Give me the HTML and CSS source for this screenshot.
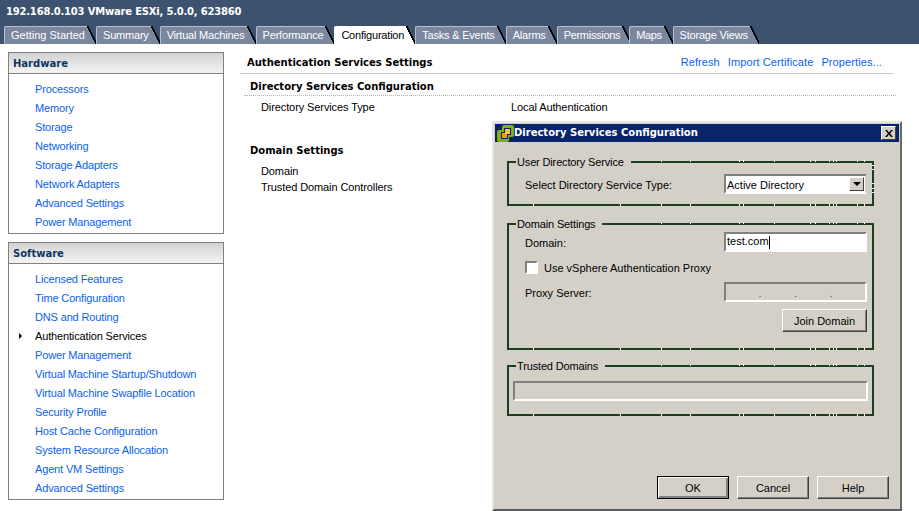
FILE: index.html
```html
<!DOCTYPE html>
<html lang="en">
<head>
<meta charset="utf-8">
<title>Directory Services Configuration</title>
<link rel="stylesheet" href="styles.css">
</head>
<body>
<header class="top">
  <div class="host">192.168.0.103 VMware ESXi, 5.0.0, 623860</div>
  <nav class="tabs">
    <a class="tab">Getting Started</a>
    <a class="tab">Summary</a>
    <a class="tab">Virtual Machines</a>
    <a class="tab">Performance</a>
    <a class="tab active">Configuration</a>
    <a class="tab">Tasks &amp; Events</a>
    <a class="tab">Alarms</a>
    <a class="tab">Permissions</a>
    <a class="tab">Maps</a>
    <a class="tab">Storage Views</a>
  </nav>
</header>
<div class="body">
  <aside class="side">
    <section class="panel">
      <h2 class="panel-head">Hardware</h2>
      <ul class="menu">
        <li>Processors</li><li>Memory</li><li>Storage</li><li>Networking</li>
        <li>Storage Adapters</li><li>Network Adapters</li><li>Advanced Settings</li><li>Power Management</li>
      </ul>
    </section>
    <section class="panel">
      <h2 class="panel-head">Software</h2>
      <ul class="menu">
        <li>Licensed Features</li><li>Time Configuration</li><li>DNS and Routing</li>
        <li class="current">Authentication Services</li>
        <li>Power Management</li><li>Virtual Machine Startup/Shutdown</li><li>Virtual Machine Swapfile Location</li>
        <li>Security Profile</li><li>Host Cache Configuration</li><li>System Resource Allocation</li>
        <li>Agent VM Settings</li><li>Advanced Settings</li>
      </ul>
    </section>
  </aside>
  <main class="content">
    <div class="content-head">
      <h1 class="title">Authentication Services Settings</h1>
      <div class="links"><a>Refresh</a><a>Import Certificate</a><a>Properties...</a></div>
    </div>
    <h3 class="sub first">Directory Services Configuration</h3>
    <div class="row"><span class="key">Directory Services Type</span><span>Local Authentication</span></div>
    <h3 class="sub second">Domain Settings</h3>
    <div class="row tight">Domain</div>
    <div class="row tight">Trusted Domain Controllers</div>
  </main>
</div>
<div class="dialog">
  <div class="titlebar">
    <svg class="logo" width="17" height="17" viewBox="0 0 17 17">
      <path d="M6 0h9a2 2 0 0 1 2 2v8a2 2 0 0 1-2 2h-3v3a2 2 0 0 1-2 2H2a2 2 0 0 1-2-2V7a2 2 0 0 1 2-2h3V2a1 1 0 0 1 1-1z" fill="#7fae1e"/>
      <path d="M7 3h7v7h-3v4H4V7h3z" fill="#0a246a"/>
      <rect x="5" y="8" width="5" height="5" fill="#ee9a18"/>
      <rect x="8" y="4" width="5" height="5" fill="#f6c440"/>
    </svg>
    <span class="dialog-title">Directory Services Configuration</span>
    <button class="close" aria-label="Close"><svg width="8" height="7" viewBox="0 0 8 7"><path d="M0 0l2 0 2 2.4L6 0l2 0-3 3.5L8 7 6 7 4 4.6 2 7 0 7l3-3.5z" fill="#000"/></svg></button>
  </div>
  <div class="dialog-body">
    <fieldset class="group g1">
      <legend>User Directory Service</legend>
      <div class="ticks"></div>
      <div class="field">
        <span>Select Directory Service Type:</span>
        <div class="select"><span>Active Directory</span><i class="arrow"></i></div>
      </div>
    </fieldset>
    <fieldset class="group g2">
      <legend>Domain Settings</legend>
      <div class="ticks"></div>
      <div class="field">
        <span>Domain:</span>
        <div class="input"><span>test.com</span><i class="caret"></i></div>
      </div>
      <label class="check"><i class="box"></i><span>Use vSphere Authentication Proxy</span></label>
      <div class="field f-proxy">
        <span>Proxy Server:</span>
        <div class="input off"><b>.</b><b>.</b><b>.</b></div>
      </div>
      <div class="join"><button class="btn wide">Join Domain</button></div>
    </fieldset>
    <fieldset class="group g3">
      <legend>Trusted Domains</legend>
      <div class="ticks"></div>
      <div class="listbox"></div>
    </fieldset>
    <div class="actions">
      <button class="btn default">OK</button>
      <button class="btn">Cancel</button>
      <button class="btn">Help</button>
    </div>
  </div>
</div>
</body>
</html>
```
FILE: styles.css
```css
* { box-sizing: border-box; }
html, body { margin: 0; padding: 0; }
body {
  width: 919px; height: 511px; overflow: hidden; position: relative;
  background: #fff; color: #000;
  font: 11px/13px "Liberation Sans", Tahoma, sans-serif;
}
ul { list-style: none; margin: 0; padding: 0; }
h1, h2, h3 { margin: 0; }

.top { height: 44px; background: #3d526e; }
.host { height: 26px; padding: 5px 0 0 6px; color: #fff; font: bold 10px/14px "DejaVu Sans", sans-serif; letter-spacing: -0.2px; }
.tabs { display: flex; height: 18px; padding-left: 4px; letter-spacing: -0.2px; }
.tab {
  position: relative; height: 18px; padding: 2px 2px 0 6px; margin-right: 9px;
  background: #7b879f; color: #fff; border-top: 1px solid #b7bfcd; border-left: 1px solid #b7bfcd;
  border-radius: 2px 0 0 0; white-space: nowrap; z-index: 1;
}
.tab:first-child { letter-spacing: 0; }
.tab:nth-child(8) { letter-spacing: -0.3px; margin-right: 7px; }
.tab:nth-child(9) { letter-spacing: -0.4px; }
.tab::after {
  content: ""; position: absolute; top: -1px; right: -9px; width: 9px; height: 18px;
  background: linear-gradient(to top right, #7b879f 0 48%, #000 48% 58%, transparent 58%);
}
.tab.active { background: #fff; color: #000; border-color: #fff; }
.tab.active::after { background: linear-gradient(to top right, #fff 0 48%, #000 48% 58%, transparent 58%); }

.body { display: flex; align-items: flex-start; height: 467px; padding: 8px 0 0 8px; }
.side { width: 216px; display: flex; flex-direction: column; gap: 8px; flex: none; }
.panel { border: 1px solid #808080; }
.panel-head {
  height: 21px; padding: 4px 0 0 4px; border-bottom: 1px solid #808080;
  color: #0f3560; font: bold 10px/14px "DejaVu Sans", sans-serif;
  background: linear-gradient(#d2d2d2, #f4f4f4);
}
.menu { padding: 6px 0 1px 26px; letter-spacing: -0.15px; }
.menu li { height: 19px; line-height: 19px; color: #0a5ff0; white-space: nowrap; position: relative; }
.menu li.current { color: #000; }
.menu li.current::before {
  content: ""; position: absolute; left: -16px; top: 6px;
  border-left: 3px solid #000; border-top: 3px solid transparent; border-bottom: 3px solid transparent;
}

.content { flex: 1; padding-left: 16px; position: relative; }
.content-head { display: flex; justify-content: space-between; width: 653px; height: 22px; border-bottom: 1px solid #c4c4c4; padding: 4px 11px 0 7px; }
.title { font: bold 10px/14px "DejaVu Sans", sans-serif; }
.links { display: flex; gap: 8px; color: #0a5ff0; letter-spacing: 0.1px; }
.sub { font: bold 10px/14px "DejaVu Sans", sans-serif; margin-left: 10px; }
.sub.first { margin-left: 4px; width: 652px; padding: 6px 0 1px 6px; border-bottom: 1px dotted #b0b0b0; height: 22px; }
.sub.second { margin-top: 30px; }
.row { display: flex; padding-left: 21px; margin-top: 5px; line-height: 13px; letter-spacing: -0.1px; }
.key { width: 250px; }
.row.tight { margin-top: 3px; height: 13px; }
.sub.second + .row { margin-top: 7px; }

.dialog {
  position: absolute; left: 492px; top: 121px; width: 410px; height: 390px;
  background: #d4d0c8; border: 2px solid; border-color: #e8e6e0 #6a6a6a #5a5a5a #e8e6e0; padding: 1px;
  display: flex; flex-direction: column; z-index: 5;
}
.titlebar { height: 18px; background: #0a246a; display: flex; align-items: center; padding: 0 3px 0 2px; flex: none; }
.logo { flex: none; }
.dialog-title { color: #fff; font: bold 10px/14px "DejaVu Sans", sans-serif; flex: 1; }
.close { width: 15px; height: 14px; padding: 0; background: #d4d0c8; border: 1px solid; border-color: #fff #404040 #404040 #fff; display: flex; align-items: center; justify-content: center; }
.dialog-body { flex: 1; padding: 13px 0 0 12px; position: relative; }
.group {
  position: relative; width: 367px; margin: 0; padding: 0 5px 0 16px; min-width: 0;
  border: 2px solid #1d3d20;
}
.group legend { padding: 0 7px 0 1px; margin-left: -9px; line-height: 15px; height: 13px; letter-spacing: -0.15px; }
.ticks { position: absolute; inset: -8px -2px -2px -2px; pointer-events: none;
  --marks: linear-gradient(90deg, transparent 26px, #fff 26px 27px, transparent 27px 113px, #fff 113px 114px, transparent 114px 154px, #fff 154px 155px, transparent 155px 183px, #fff 183px 184px, transparent 184px 232px, #fff 232px 233px, transparent 233px 236px, #fff 236px 237px, transparent 237px 267px, #fff 267px 268px, transparent 268px 303px, #fff 303px 304px, transparent 304px 308px, #fff 308px 309px, transparent 309px 322px, #fff 322px 323px, transparent 323px 326px, #fff 326px 327px, transparent 327px 329px, #fff 329px 330px, transparent 330px 350px, #fff 350px 351px, transparent 351px 357px, #fff 357px 358px, transparent 358px);
  --marks-top: linear-gradient(90deg, transparent 154px, #fff 154px 155px, transparent 155px 183px, #fff 183px 184px, transparent 184px 232px, #fff 232px 233px, transparent 233px 236px, #fff 236px 237px, transparent 237px 267px, #fff 267px 268px, transparent 268px 303px, #fff 303px 304px, transparent 304px 308px, #fff 308px 309px, transparent 309px 322px, #fff 322px 323px, transparent 323px 326px, #fff 326px 327px, transparent 327px 329px, #fff 329px 330px, transparent 330px 350px, #fff 350px 351px, transparent 351px 357px, #fff 357px 358px, transparent 358px);
  background: var(--marks) 0 100% / 100% 2px no-repeat, var(--marks-top) 0 0 / 100% 2px no-repeat;
}
.g1 .ticks {
  background:
    linear-gradient(180deg, transparent 5px, #fff 5px 6px, transparent 6px 9px, #fff 9px 10px, transparent 10px 23px, #fff 23px 24px, transparent 24px 28px, #fff 28px 29px, transparent 29px 32px, #fff 32px 33px, transparent 33px) 100% 0 / 2px 100% no-repeat,
    var(--marks) 0 100% / 100% 2px no-repeat,
    var(--marks-top) 0 0 / 100% 2px no-repeat;
}
.g1 { height: 51px; }
.g2 { height: 133px; margin-top: 11px; }
.g3 { height: 57px; margin-top: 9px; padding-left: 4px; }
.g3 legend { margin-left: 3px; }
.field { display: flex; align-items: center; justify-content: space-between; }
.field > span { padding-top: 2px; }
.g1 .field { margin-top: 6px; }
.g2 .field { margin-top: 2px; }
.select, .input { width: 143px; height: 20px; background: #fff; border: 2px solid; border-color: #808080 #fff #fff #808080; display: flex; align-items: center; padding-left: 1px; position: relative; }
.input span { position: relative; top: -1px; }
.select { justify-content: space-between; padding: 0; height: 20px; border-color: #808080 #d4d0c8 #fff #808080; }
.select span { padding: 2px 0 0 1px; }
.arrow { width: 15px; height: 14px; margin-right: 1px; background: #d4d0c8; border: 1px solid; border-color: #fff #404040 #404040 #fff; position: relative; }
.arrow::after { content: ""; position: absolute; left: 3px; top: 4px; border-top: 4px solid #000; border-left: 4px solid transparent; border-right: 4px solid transparent; }
.caret { width: 1px; height: 13px; background: #000; }
.check { display: flex; align-items: center; gap: 6px; margin-top: 9px; height: 13px; }
.check span { padding-top: 2px; }
.box { width: 13px; height: 13px; background: #fff; border: 2px solid; border-color: #808080 #fff #fff #808080; flex: none; }
.g2 .f-proxy { margin-top: 8px; }
.input.off { background: #d4d0c8; padding: 0; justify-content: space-evenly; color: #555; font-weight: normal; }
.input.off b { font-weight: normal; line-height: 13px; position: relative; top: 1px; }
.join { display: flex; justify-content: flex-end; margin-top: 7px; }
.listbox { height: 20px; margin-top: 9px; width: 355px; border: 2px solid; border-color: #808080 #fff #fff #808080; }
.btn {
  width: 72px; height: 23px; padding: 2px 0 0; background: #d4d0c8; color: #000; font: inherit;
  border: 1px solid; border-color: #fff #404040 #404040 #fff; box-shadow: inset -1px -1px 0 #808080;
}
.btn.wide { width: 85px; }
.btn.default { border: 1px solid #000; box-shadow: inset 1px 1px 0 #fff, inset -2px -2px 0 #808080; }
.actions { position: absolute; right: 10px; bottom: 9px; display: flex; gap: 8px; }
```
